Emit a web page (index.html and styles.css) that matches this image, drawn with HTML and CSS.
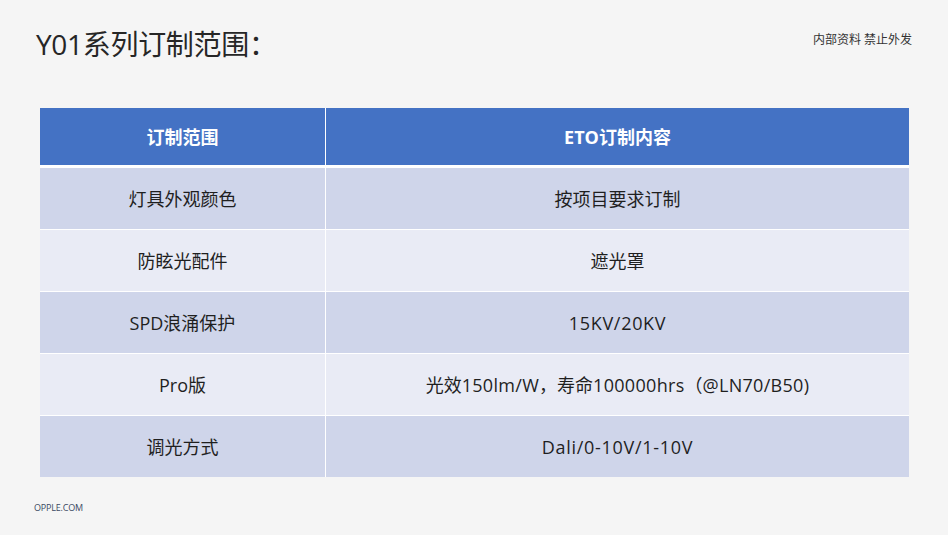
FILE: index.html
```html
<!DOCTYPE html>
<html lang="zh-CN">
<head>
<meta charset="utf-8">
<link rel="stylesheet" href="styles.css">
</head>
<body>
<div class="slide">
  <header class="top">
    <h1 class="title">Y01系列订制范围：</h1>
    <div class="tag">内部资料 禁止外发</div>
  </header>
  <div class="table">
    <div class="cell head">订制范围</div>
    <div class="cell head">ETO订制内容</div>
    <div class="cell odd">灯具外观颜色</div>
    <div class="cell odd">按项目要求订制</div>
    <div class="cell even">防眩光配件</div>
    <div class="cell even">遮光罩</div>
    <div class="cell odd">SPD浪涌保护</div>
    <div class="cell odd"><span class="lat">15KV/20KV</span></div>
    <div class="cell even">Pro版</div>
    <div class="cell even">光效<span class="lat-s">150lm/W</span>，寿命<span class="lat-s">100000hrs</span>（<span class="lat-s">@LN70/B50)</span></div>
    <div class="cell odd">调光方式</div>
    <div class="cell odd"><span class="lat">Dali/0-10V/1-10V</span></div>
  </div>
  <footer class="foot">OPPLE.COM</footer>
</div>
</body>
</html>
```

FILE: styles.css
```css
* { box-sizing: border-box; }
html, body {
  margin: 0;
  padding: 0;
  background: #f5f5f5;
}
body {
  font-family: "Open Sans", "Noto Sans CJK SC", sans-serif;
  color: #222;
}
.slide {
  width: 948px;
  height: 535px;
  display: flex;
  flex-direction: column;
  overflow: hidden;
}
.top {
  display: flex;
  justify-content: space-between;
  align-items: flex-start;
  padding: 24px 36px 0 36px;
  height: 108px;
}
.title {
  margin: 0;
  font-size: 28px;
  font-weight: 400;
  line-height: 40px;
  color: #262626;
  letter-spacing: -0.3px;
}
.tag {
  font-size: 12px;
  line-height: 16px;
  margin-top: 8px;
  color: #333;
}
.table {
  margin-left: 40px;
  width: 869px;
  display: grid;
  grid-template-columns: 285px 583px;
  grid-template-rows: 59px repeat(5, 61px);
  column-gap: 1px;
  row-gap: 1px;
  background: #ffffff;
}
.cell {
  display: flex;
  align-items: center;
  justify-content: center;
  font-size: 18px;
  line-height: 24px;
  color: #1f1f1f;
  white-space: pre;
}
.lat {
  letter-spacing: 0.7px;
}
.lat-s {
  letter-spacing: 0.3px;
}
.head {
  background: #4472c4;
  color: #fff;
  font-weight: 700;
  margin-bottom: 2px;
}
.odd { background: #cfd5ea; }
.even { background: #e9ebf5; }
.foot {
  margin-top: 24px;
  padding-left: 34px;
  font-size: 9px;
  color: #3b4a63;
  font-family: "Open Sans", "Noto Sans", sans-serif;
  letter-spacing: -0.2px;
}
```
